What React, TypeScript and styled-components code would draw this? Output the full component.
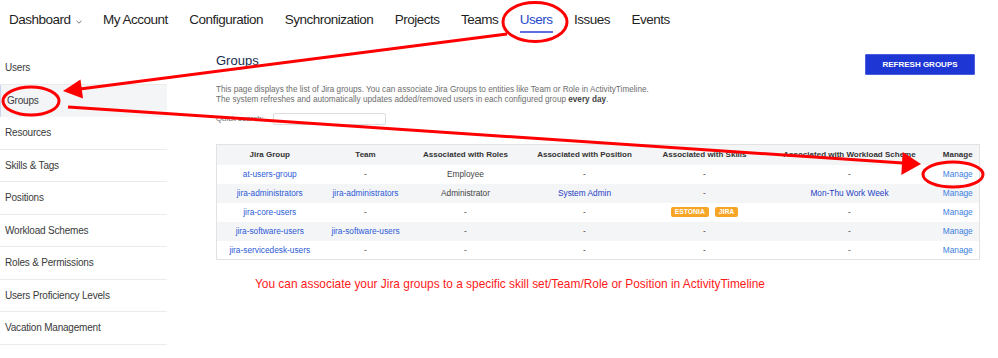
import React from "react";
import styled, { createGlobalStyle } from "styled-components";

const GlobalStyle = createGlobalStyle`
  html, body {
    margin: 0;
    padding: 0;
    background: #ffffff;
  }
  body {
    font-family: "Liberation Sans", Arial, sans-serif;
    color: #333333;
  }
`;

const navItems = [
  "Dashboard",
  "My Account",
  "Configuration",
  "Synchronization",
  "Projects",
  "Teams",
  "Users",
  "Issues",
  "Events",
];

const sideItems = [
  "Users",
  "Groups",
  "Resources",
  "Skills & Tags",
  "Positions",
  "Workload Schemes",
  "Roles & Permissions",
  "Users Proficiency Levels",
  "Vacation Management",
];

type Cell = { text: string; kind?: "link" | "strong" | "plain" } | { badges: string[] };

const rows: Cell[][] = [
  [
    { text: "at-users-group", kind: "link" },
    { text: "-" },
    { text: "Employee" },
    { text: "-" },
    { text: "-" },
    { text: "-" },
  ],
  [
    { text: "jira-administrators", kind: "link" },
    { text: "jira-administrators", kind: "link" },
    { text: "Administrator" },
    { text: "System Admin", kind: "strong" },
    { text: "-" },
    { text: "Mon-Thu Work Week", kind: "strong" },
  ],
  [
    { text: "jira-core-users", kind: "link" },
    { text: "-" },
    { text: "-" },
    { text: "-" },
    { badges: ["ESTONIA", "JIRA"] },
    { text: "-" },
  ],
  [
    { text: "jira-software-users", kind: "link" },
    { text: "jira-software-users", kind: "link" },
    { text: "-" },
    { text: "-" },
    { text: "-" },
    { text: "-" },
  ],
  [
    { text: "jira-servicedesk-users", kind: "link" },
    { text: "-" },
    { text: "-" },
    { text: "-" },
    { text: "-" },
    { text: "-" },
  ],
];

const columns = [
  { title: "Jira Group", width: 106 },
  { title: "Team", width: 86 },
  { title: "Associated with Roles", width: 114 },
  { title: "Associated with Position", width: 124 },
  { title: "Associated with Skills", width: 116 },
  { title: "Associated with Workload Scheme", width: 174 },
  { title: "Manage", width: 43 },
];

const App: React.FC = () => {
  return (
    <Page>
      <GlobalStyle />
      <TopNav>
        {navItems.map((item) => (
          <NavItem key={item} $active={item === "Users"}>
            {item}
            {item === "Dashboard" && (
              <Chevron width="6" height="4" viewBox="0 0 6 4">
                <path d="M0.5 0.8 L3 3.2 L5.5 0.8" fill="none" stroke="#666" strokeWidth="0.9" />
              </Chevron>
            )}
          </NavItem>
        ))}
      </TopNav>

      <Body>
        <Sidebar>
          {sideItems.map((item) => (
            <SideItem key={item} $active={item === "Groups"}>
              {item}
            </SideItem>
          ))}
        </Sidebar>

        <Main>
          <HeaderRow>
            <Title>Groups</Title>
            <RefreshButton>Refresh groups</RefreshButton>
          </HeaderRow>

          <Intro>
            This page displays the list of Jira groups. You can associate Jira Groups to entities like Team or Role in ActivityTimeline.
            <br />
            The system refreshes and automatically updates added/removed users in each configured group <b>every day</b>.
          </Intro>

          <SearchRow>
            <SearchLabel>Quick search:</SearchLabel>
            <SearchInput />
          </SearchRow>

          <GroupsTable>
            <colgroup>
              {columns.map((c) => (
                <col key={c.title} style={{ width: c.width }} />
              ))}
            </colgroup>
            <thead>
              <tr>
                {columns.map((c) => (
                  <HeadCell key={c.title}>{c.title}</HeadCell>
                ))}
              </tr>
            </thead>
            <tbody>
              {rows.map((row, r) => (
                <BodyRow key={r} $striped={r % 2 === 1}>
                  {row.map((cell, c) => (
                    <BodyCell key={c}>
                      {"badges" in cell ? (
                        <BadgeList>
                          {cell.badges.map((b) => (
                            <Badge key={b}>{b}</Badge>
                          ))}
                        </BadgeList>
                      ) : (
                        <CellText $kind={cell.kind ?? "plain"}>{cell.text}</CellText>
                      )}
                    </BodyCell>
                  ))}
                  <BodyCell>
                    <ManageLink>Manage</ManageLink>
                  </BodyCell>
                </BodyRow>
              ))}
            </tbody>
          </GroupsTable>

          <Note>
            You can associate your Jira groups to a specific skill set/Team/Role or Position in ActivityTimeline
          </Note>
        </Main>
      </Body>

      <Annotations width="998" height="358" viewBox="0 0 998 358">
        <g fill="none" stroke="#ff0000" strokeWidth="3">
          <ellipse cx="535" cy="22" rx="32" ry="19.5" />
          <ellipse cx="31" cy="101" rx="28" ry="14" />
          <ellipse cx="953" cy="174.5" rx="30" ry="12.5" />
          <line x1="507" y1="34" x2="80" y2="89" />
          <line x1="68" y1="107" x2="903" y2="163" />
        </g>
        <g fill="#ff0000">
          <polygon points="63,91 83,98.5 80.5,79.5" />
          <polygon points="921,164 902.7,152 901.3,175" />
        </g>
      </Annotations>
    </Page>
  );
};

const Page = styled.div`
  position: relative;
  width: 998px;
  height: 358px;
  overflow: hidden;
  background: #ffffff;
`;

const TopNav = styled.nav`
  height: 42px;
  display: flex;
  align-items: flex-start;
  gap: 21.5px;
  padding-left: 9px;
  box-sizing: border-box;
`;

const NavItem = styled.div<{ $active?: boolean }>`
  display: flex;
  align-items: center;
  gap: 5px;
  padding-top: 13px;
  padding-bottom: 4px;
  font-size: 13.5px;
  line-height: 14px;
  letter-spacing: -0.5px;
  color: ${(p) => (p.$active ? "#2447c8" : "#1f1f1f")};
  border-bottom: 2px solid ${(p) => (p.$active ? "#5b6fe0" : "transparent")};
`;

const Chevron = styled.svg`
  margin-top: 4px;
`;

const Body = styled.div`
  display: flex;
  align-items: flex-start;
`;

const Sidebar = styled.aside`
  width: 167px;
  flex-shrink: 0;
  padding-top: 10px;
`;

const SideItem = styled.div<{ $active?: boolean }>`
  height: 32.5px;
  box-sizing: border-box;
  padding-top: 10px;
  padding-left: ${(p) => (p.$active ? "6px" : "5px")};
  font-size: 10px;
  line-height: 11px;
  letter-spacing: -0.2px;
  color: #3a3a3a;
  background: ${(p) => (p.$active ? "#f4f5f7" : "transparent")};
  border-left: ${(p) => (p.$active ? "1px solid #c9d3ec" : "none")};
  border-bottom: 1px solid ${(p) => (p.$active ? "#f4f5f7" : "#ebebeb")};
`;

const Main = styled.main`
  flex: 1;
  padding: 10px 20px 0 49px;
`;

const HeaderRow = styled.div`
  display: flex;
  justify-content: space-between;
  align-items: flex-start;
  padding-right: 5px;
`;

const Title = styled.h1`
  margin: 1px 0 0;
  font-size: 13px;
  line-height: 16px;
  font-weight: 400;
  color: #172b4d;
`;

const RefreshButton = styled.button`
  margin-top: 2px;
  width: 110px;
  height: 21px;
  padding: 0;
  background: #1e37d4;
  border: 1px solid #4a5ee0;
  border-radius: 1px;
  color: #ffffff;
  font-family: "Liberation Sans", Arial, sans-serif;
  font-size: 8px;
  font-weight: 700;
  text-transform: uppercase;
`;

const Intro = styled.p`
  margin: 10px 0 0;
  font-size: 8.2px;
  line-height: 9.5px;
  color: #6d6d6d;

  b {
    color: #444444;
  }
`;

const SearchRow = styled.div`
  display: flex;
  align-items: center;
  margin-top: 8.5px;
`;

const SearchLabel = styled.label`
  width: 57px;
  font-size: 7.8px;
  color: #6d6d6d;
`;

const SearchInput = styled.input`
  width: 113px;
  height: 12px;
  box-sizing: border-box;
  border: 1px solid #dcdcdc;
  border-radius: 2px;
  padding: 0;
`;

const GroupsTable = styled.table`
  margin-top: 19px;
  width: 763px;
  table-layout: fixed;
  border-collapse: collapse;
  border: 1px solid #e2e2e2;
  font-size: 8.3px;
`;

const HeadCell = styled.th`
  height: 20px;
  padding: 0;
  background: #f4f5f7;
  font-size: 8px;
  font-weight: 700;
  color: #333333;
  text-align: center;
  white-space: nowrap;
`;

const BodyRow = styled.tr<{ $striped?: boolean }>`
  height: 19px;
  background: ${(p) => (p.$striped ? "#f4f5f7" : "#ffffff")};
`;

const BodyCell = styled.td`
  padding: 0;
  text-align: center;
  white-space: nowrap;
`;

const CellText = styled.span<{ $kind: "link" | "strong" | "plain" }>`
  color: ${(p) =>
    p.$kind === "link" ? "#2d5ad6" : p.$kind === "strong" ? "#1d3ec4" : "#444444"};
`;

const ManageLink = styled.span`
  color: #3b7fe0;
`;

const BadgeList = styled.div`
  display: flex;
  justify-content: center;
  gap: 6px;
`;

const Badge = styled.span`
  display: inline-block;
  height: 10px;
  line-height: 10px;
  padding: 0 4px;
  border-radius: 2px;
  background: #f7a526;
  color: #ffffff;
  font-size: 6.8px;
  font-weight: 700;
`;

const Note = styled.p`
  margin: 17px 0 0 39px;
  font-size: 11.9px;
  line-height: 14px;
  color: #ff1a1a;
`;

const Annotations = styled.svg`
  position: absolute;
  left: 0;
  top: 0;
  pointer-events: none;
`;

export default App;
